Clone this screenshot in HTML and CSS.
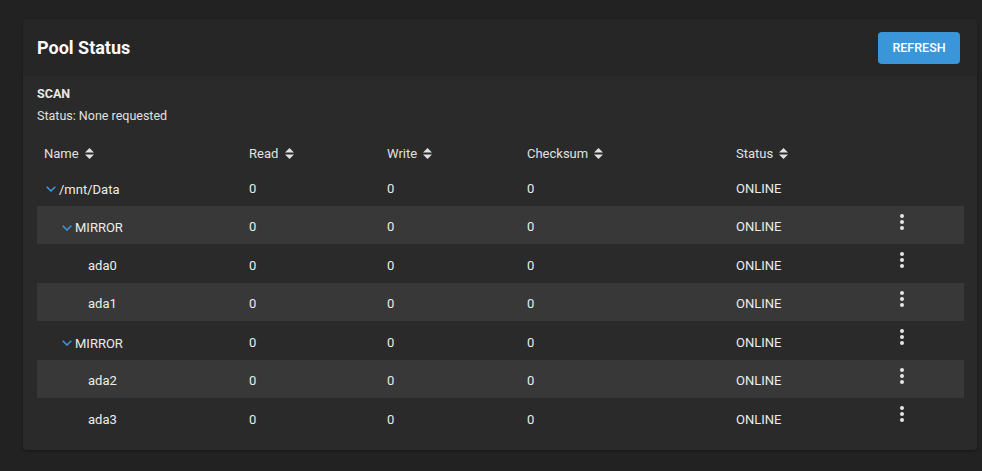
FILE: index.html
```html
<!DOCTYPE html>
<html lang="en">
<head>
  <meta charset="UTF-8" />
  <meta name="viewport" content="width=device-width, initial-scale=1" />
  <title>Pool Status</title>
  <link rel="stylesheet" href="styles.css">
</head>
<body>
  <div class="card">
    <div class="card-head">
      <h2>Pool Status</h2>
      <button class="btn">REFRESH</button>
    </div>

    <div class="card-body">
      <div class="scan-title">SCAN</div>
      <div class="scan-status">Status: None requested</div>

      <table class="pool">
        <colgroup>
          <col class="c-name"><col class="c-read"><col class="c-write"><col class="c-sum"><col class="c-status"><col>
        </colgroup>
        <thead>
          <tr>
            <th>Name <svg class="sort" viewBox="0 0 9 11"><path d="M4.5 0 9 4.5H0z M4.5 11 0 6.5h9z"/></svg></th>
            <th>Read <svg class="sort" viewBox="0 0 9 11"><path d="M4.5 0 9 4.5H0z M4.5 11 0 6.5h9z"/></svg></th>
            <th>Write <svg class="sort" viewBox="0 0 9 11"><path d="M4.5 0 9 4.5H0z M4.5 11 0 6.5h9z"/></svg></th>
            <th>Checksum <svg class="sort" viewBox="0 0 9 11"><path d="M4.5 0 9 4.5H0z M4.5 11 0 6.5h9z"/></svg></th>
            <th>Status <svg class="sort" viewBox="0 0 9 11"><path d="M4.5 0 9 4.5H0z M4.5 11 0 6.5h9z"/></svg></th>
            <th></th>
          </tr>
        </thead>
        <tbody>
          <tr>
            <td><span class="node lvl0"><svg class="chev" viewBox="0 0 10 6"><path d="M0.7 0.7 5 5 9.3 0.7"/></svg>/mnt/Data</span></td>
            <td>0</td><td>0</td><td>0</td><td>ONLINE</td><td></td>
          </tr>
          <tr class="alt">
            <td><span class="node lvl1"><svg class="chev" viewBox="0 0 10 6"><path d="M0.7 0.7 5 5 9.3 0.7"/></svg>MIRROR</span></td>
            <td>0</td><td>0</td><td>0</td><td>ONLINE</td><td class="act"><span class="dots"><i></i><i></i><i></i></span></td>
          </tr>
          <tr>
            <td><span class="node lvl2">ada0</span></td>
            <td>0</td><td>0</td><td>0</td><td>ONLINE</td><td class="act"><span class="dots"><i></i><i></i><i></i></span></td>
          </tr>
          <tr class="alt">
            <td><span class="node lvl2">ada1</span></td>
            <td>0</td><td>0</td><td>0</td><td>ONLINE</td><td class="act"><span class="dots"><i></i><i></i><i></i></span></td>
          </tr>
          <tr>
            <td><span class="node lvl1"><svg class="chev" viewBox="0 0 10 6"><path d="M0.7 0.7 5 5 9.3 0.7"/></svg>MIRROR</span></td>
            <td>0</td><td>0</td><td>0</td><td>ONLINE</td><td class="act"><span class="dots"><i></i><i></i><i></i></span></td>
          </tr>
          <tr class="alt">
            <td><span class="node lvl2">ada2</span></td>
            <td>0</td><td>0</td><td>0</td><td>ONLINE</td><td class="act"><span class="dots"><i></i><i></i><i></i></span></td>
          </tr>
          <tr>
            <td><span class="node lvl2">ada3</span></td>
            <td>0</td><td>0</td><td>0</td><td>ONLINE</td><td class="act"><span class="dots"><i></i><i></i><i></i></span></td>
          </tr>
        </tbody>
      </table>
    </div>
  </div>
</body>
</html>
```

FILE: styles.css
```css
body { margin: 0; background: #222222; font-family: Roboto, "Liberation Sans", sans-serif; color: #e6e6e6; }
.card { margin: 19px 5px 20px 23px; background: #2a2a2a; border-radius: 4px; box-shadow: 0 1px 3px rgba(0,0,0,0.35); overflow: hidden; }
.card-head { height: 57px; display: flex; align-items: center; justify-content: space-between; padding: 0 17px 0 14px; background: #262626; }
.card-head h2 { margin: 0; font-size: 18px; font-weight: 700; color: #fafafa; }
.btn { width: 82px; height: 32px; background: #3a95d9; color: #fff; border: none; border-radius: 4px; font-family: inherit; font-size: 12.5px; font-weight: 500; padding: 0; }
.card-body { padding: 7px 13px 13px 14px; }
.scan-title { font-size: 12.5px; font-weight: 700; line-height: 22px; color: #e8e8e8; }
.scan-status { font-size: 12.5px; line-height: 22px; color: #e0e0e0; }
.pool { width: 100%; border-collapse: collapse; table-layout: fixed; margin-top: 6px; font-size: 13px; }
.c-name { width: 205px; }
.c-read { width: 138px; }
.c-write { width: 140px; }
.c-sum { width: 209px; }
.c-status { width: 161px; }
.pool th { height: 34px; padding: 6px 7px 0; box-sizing: border-box; text-align: left; font-weight: 400; color: #e0e0e0; }
.pool td { height: 38.5px; padding: 4px 7px 0; box-sizing: border-box; color: #ececec; }
.pool tr.alt td { background: #383838; }
.sort { width: 9px; height: 11px; fill: #e0e0e0; vertical-align: -1px; margin-left: 3px; }
.node { display: inline-flex; align-items: center; }
.lvl0 { padding-left: 2px; }
.lvl1 { padding-left: 18px; }
.lvl2 { padding-left: 44px; }
.chev { width: 10px; height: 6px; margin-right: 3px; fill: none; stroke: #3a95d9; stroke-width: 1.6; }
.pool td.act { vertical-align: top; padding: 8px 0 0 10px; }
.dots { display: flex; flex-direction: column; gap: 2px; width: 4px; }
.dots i { width: 4px; height: 4px; border-radius: 50%; background: #e6e6e6; }
```
